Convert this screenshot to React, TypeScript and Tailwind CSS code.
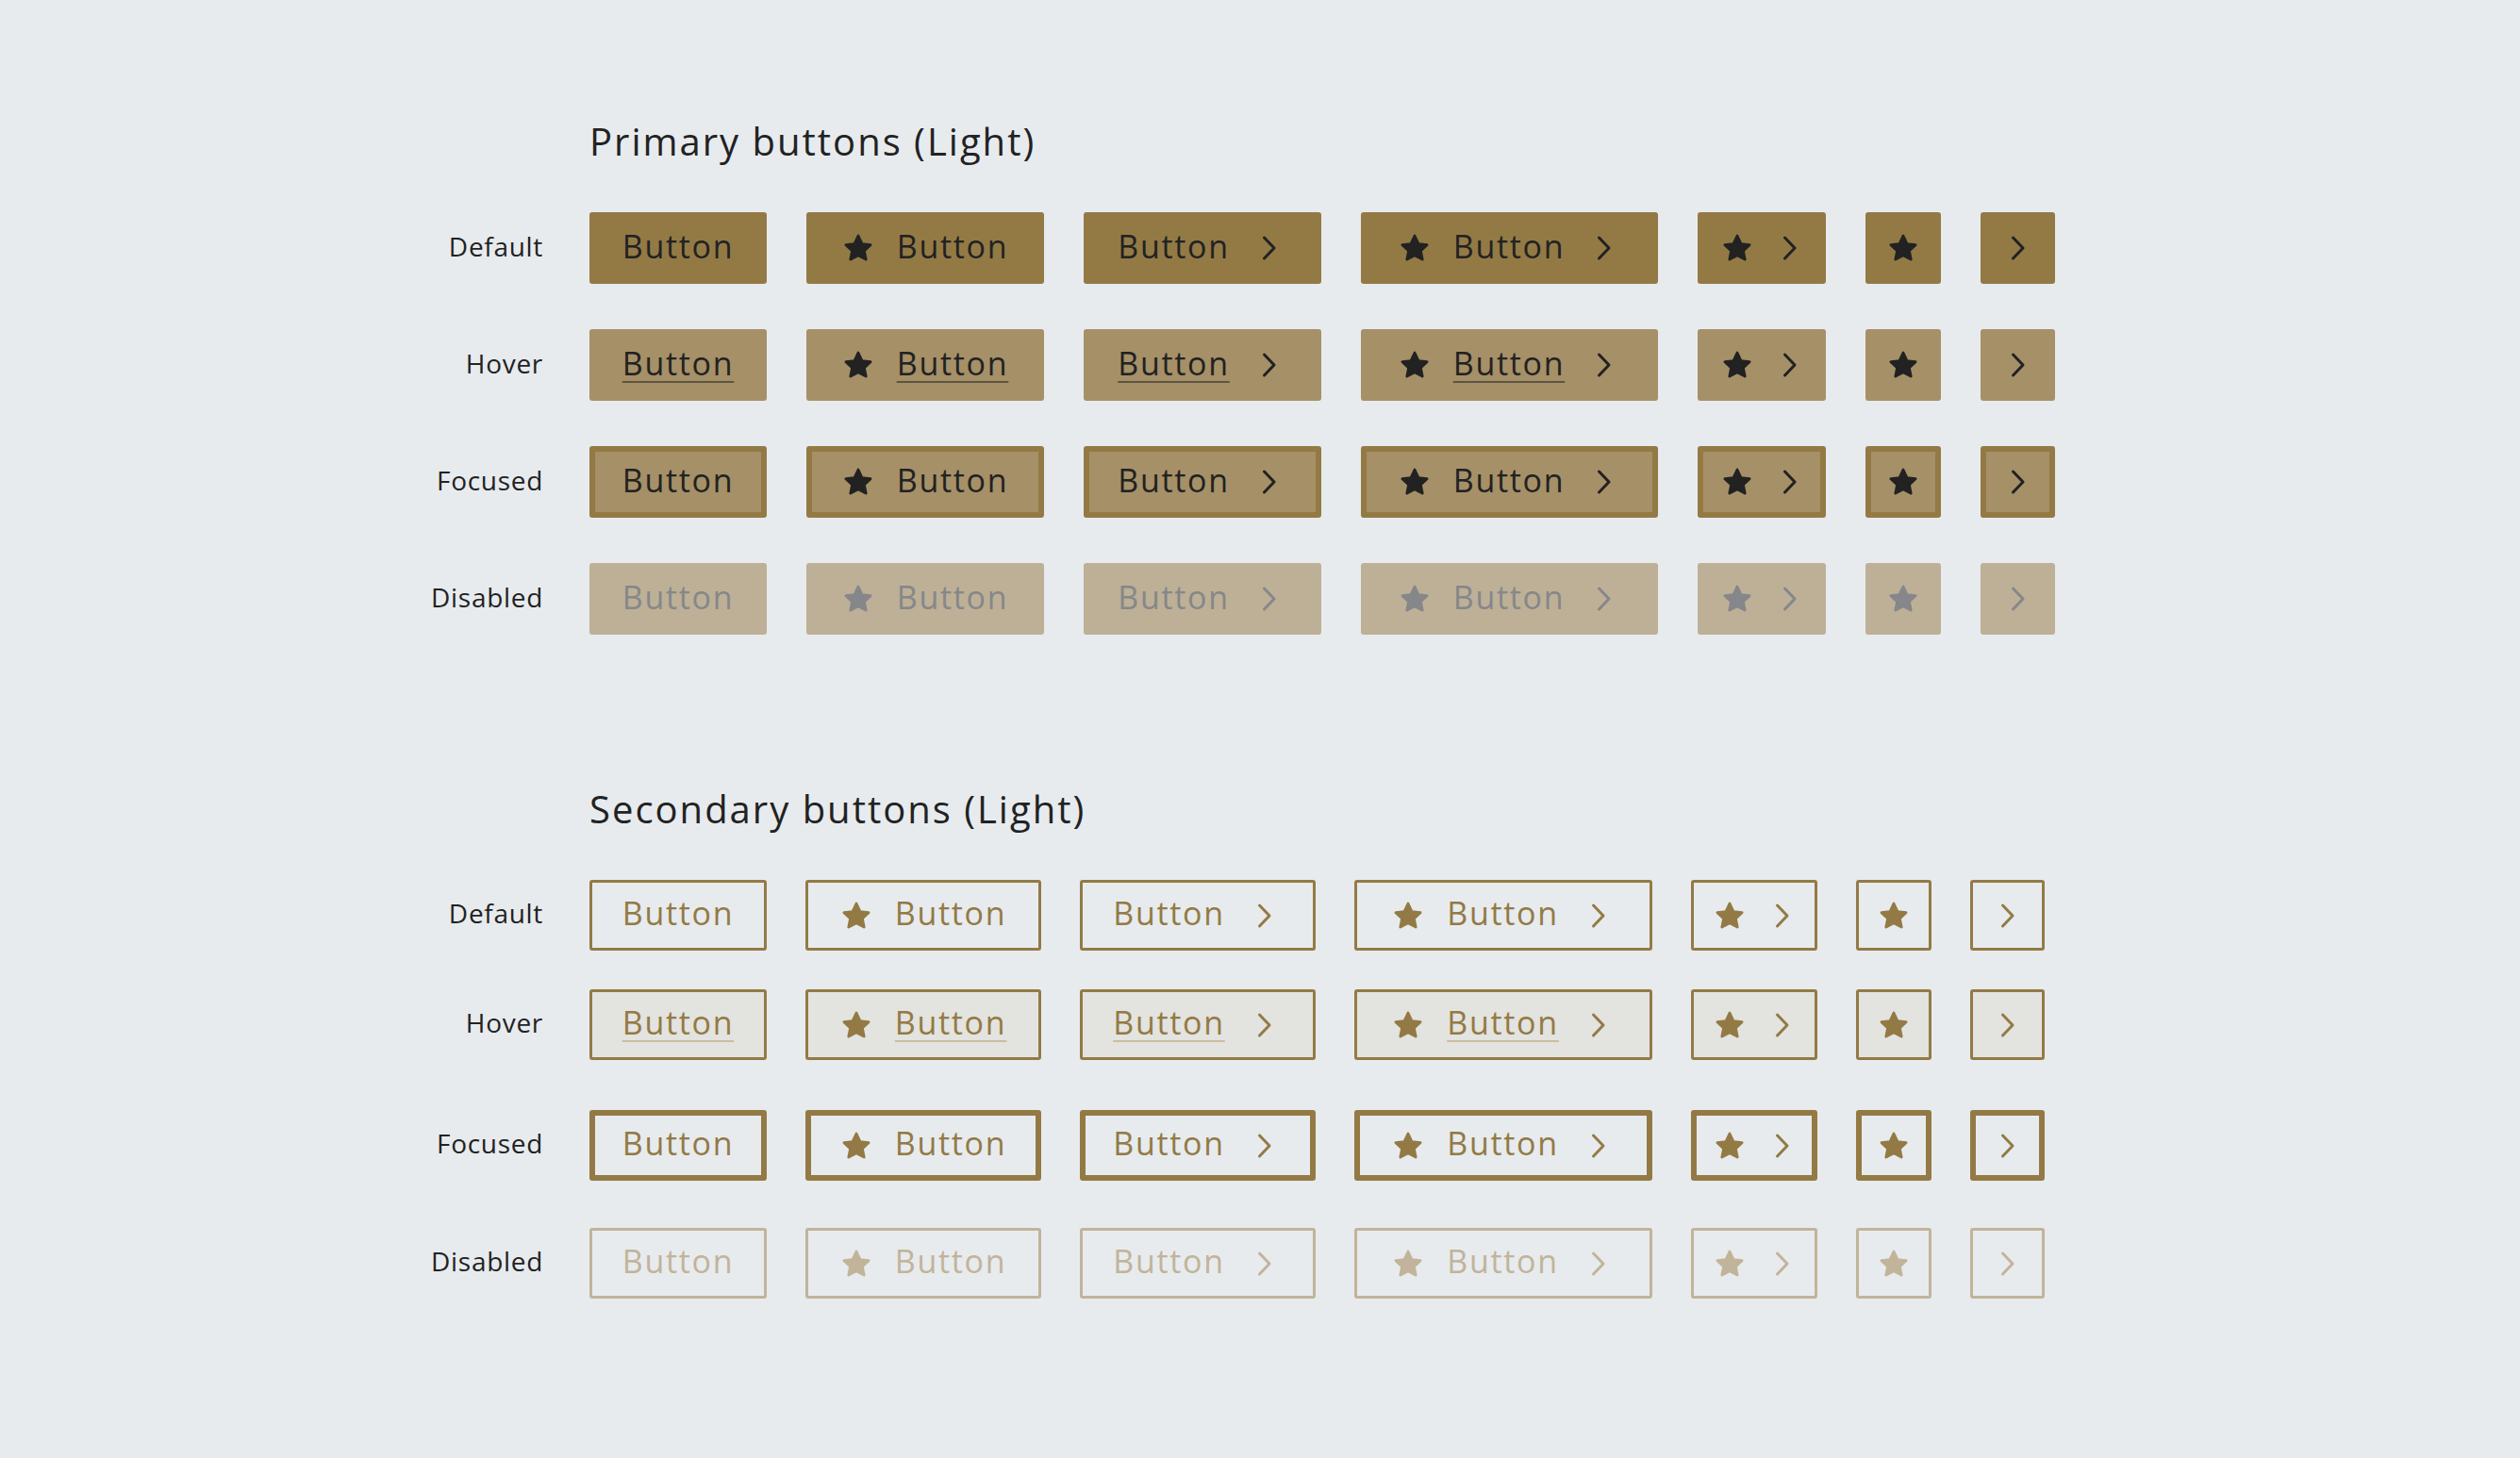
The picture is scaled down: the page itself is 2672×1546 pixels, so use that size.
import React from 'react';

type Kind = 'primary' | 'secondary';
type State = 'default' | 'hover' | 'focused' | 'disabled';
type Content = 'text' | 'star-text' | 'text-chev' | 'star-text-chev' | 'star-chev' | 'star' | 'chev';

const contents: Content[] = ['text', 'star-text', 'text-chev', 'star-text-chev', 'star-chev', 'star', 'chev'];

const primaryWidths = ['w-[188px]', 'w-[252px]', 'w-[252px]', 'w-[315px]', 'w-[136px]', 'w-[80px]', 'w-[79px]'];
const secondaryWidths = ['w-[188px]', 'w-[250px]', 'w-[250px]', 'w-[316px]', 'w-[134px]', 'w-[80px]', 'w-[79px]'];

const stateClasses: Record<Kind, Record<State, string>> = {
  primary: {
    default: 'bg-[#937a45] text-[#222222]',
    hover: 'bg-[#a69067] text-[#222222]',
    focused: 'bg-[#a69067] text-[#222222] border-[6px] border-[#937a45]',
    disabled: 'bg-[#bdb096] text-[#86878a]',
  },
  secondary: {
    default: 'border-[3px] border-[#937a45] text-[#937a45]',
    hover: 'bg-[#e3e3df] border-[3px] border-[#937a45] text-[#937a45]',
    focused: 'border-[6px] border-[#937a45] text-[#937a45]',
    disabled: 'border-[3px] border-[#c1b49a] text-[#c1b49a]',
  },
};

const underlineClasses: Record<Kind, string> = {
  primary: 'underline decoration-[2px] underline-offset-[6px] decoration-[#5d5443]',
  secondary: 'underline decoration-[2px] underline-offset-[6px] decoration-[#cbbd9f]',
};

const Star = () => (
  <svg width="34" height="32" viewBox="0 0 24 23" className="shrink-0">
    <polygon
      points="12,2.2 14.9,8.3 21.4,9.1 16.6,13.6 17.9,20.2 12,17 6.1,20.2 7.4,13.6 2.6,9.1 9.1,8.3"
      fill="currentColor"
      stroke="currentColor"
      strokeWidth="2"
      strokeLinejoin="round"
    />
  </svg>
);

const Chevron = () => (
  <svg width="18" height="28" viewBox="0 0 18 28" className="shrink-0">
    <polyline
      points="3.5,3 14,14 3.5,25"
      fill="none"
      stroke="currentColor"
      strokeWidth="3"
      strokeLinecap="round"
      strokeLinejoin="round"
    />
  </svg>
);

function DemoButton({ kind, state, content, width }: { kind: Kind; state: State; content: Content; width: string }) {
  const label = (
    <span className={`block -mt-[5px] ${state === 'hover' ? underlineClasses[kind] : ''}`}>Button</span>
  );
  const h = kind === 'primary' ? 'h-[76px]' : 'h-[75px]';

  return (
    <div
      className={`${width} ${h} ${stateClasses[kind][state]} box-border shrink-0 rounded-[3px] flex items-center justify-center text-[34px] leading-none tracking-[0.05em]`}
    >
      {content === 'text' && label}
      {content === 'star-text' && (
        <div className="flex items-center gap-[24px]">
          <Star />
          {label}
        </div>
      )}
      {content === 'text-chev' && (
        <div className="flex items-center gap-[33px] mr-[10px]">
          {label}
          <Chevron />
        </div>
      )}
      {content === 'star-text-chev' && (
        <div className="flex items-center mr-[8px]">
          <Star />
          <span className="ml-[24px]">{label}</span>
          <span className="ml-[33px] flex">
            <Chevron />
          </span>
        </div>
      )}
      {content === 'star-chev' && (
        <div className="flex items-center gap-[30px] mr-[4px]">
          <Star />
          <Chevron />
        </div>
      )}
      {content === 'star' && <Star />}
      {content === 'chev' && <Chevron />}
    </div>
  );
}

function Row({ label, kind, state, className }: { label: string; kind: Kind; state: State; className?: string }) {
  const widths = kind === 'primary' ? primaryWidths : secondaryWidths;
  return (
    <div className={`flex items-center ${className ?? ''}`}>
      <div className="w-[576px] shrink-0 -mt-[5px] text-right text-[28px] text-[#222222] tracking-[0.025em]">{label}</div>
      <div className={`ml-[49px] flex ${kind === 'primary' ? 'gap-[42px]' : 'gap-[41px]'}`}>
        {contents.map((c, i) => (
          <DemoButton key={c} kind={kind} state={state} content={c} width={widths[i]} />
        ))}
      </div>
    </div>
  );
}

export default function App() {
  return (
    <div
      className="w-[2672px] h-[1546px] bg-[#e7ebee] overflow-hidden"
      style={{ fontFamily: '"Open Sans", "Liberation Sans", sans-serif' }}
    >
      <div className="pt-[126px]">
        <h2 className="ml-[625px] text-[40px] leading-[48px] text-[#222222] tracking-[0.05em]">Primary buttons (Light)</h2>
        <div className="mt-[51px] flex flex-col gap-[48px]">
          <Row label="Default" kind="primary" state="default" />
          <Row label="Hover" kind="primary" state="hover" />
          <Row label="Focused" kind="primary" state="focused" />
          <Row label="Disabled" kind="primary" state="disabled" />
        </div>

        <h2 className="mt-[161px] ml-[625px] text-[40px] leading-[48px] text-[#222222] tracking-[0.05em]">Secondary buttons (Light)</h2>
        <div className="mt-[51px] flex flex-col">
          <Row label="Default" kind="secondary" state="default" />
          <Row label="Hover" kind="secondary" state="hover" className="mt-[41px]" />
          <Row label="Focused" kind="secondary" state="focused" className="mt-[53px]" />
          <Row label="Disabled" kind="secondary" state="disabled" className="mt-[50px]" />
        </div>
      </div>
    </div>
  );
}
